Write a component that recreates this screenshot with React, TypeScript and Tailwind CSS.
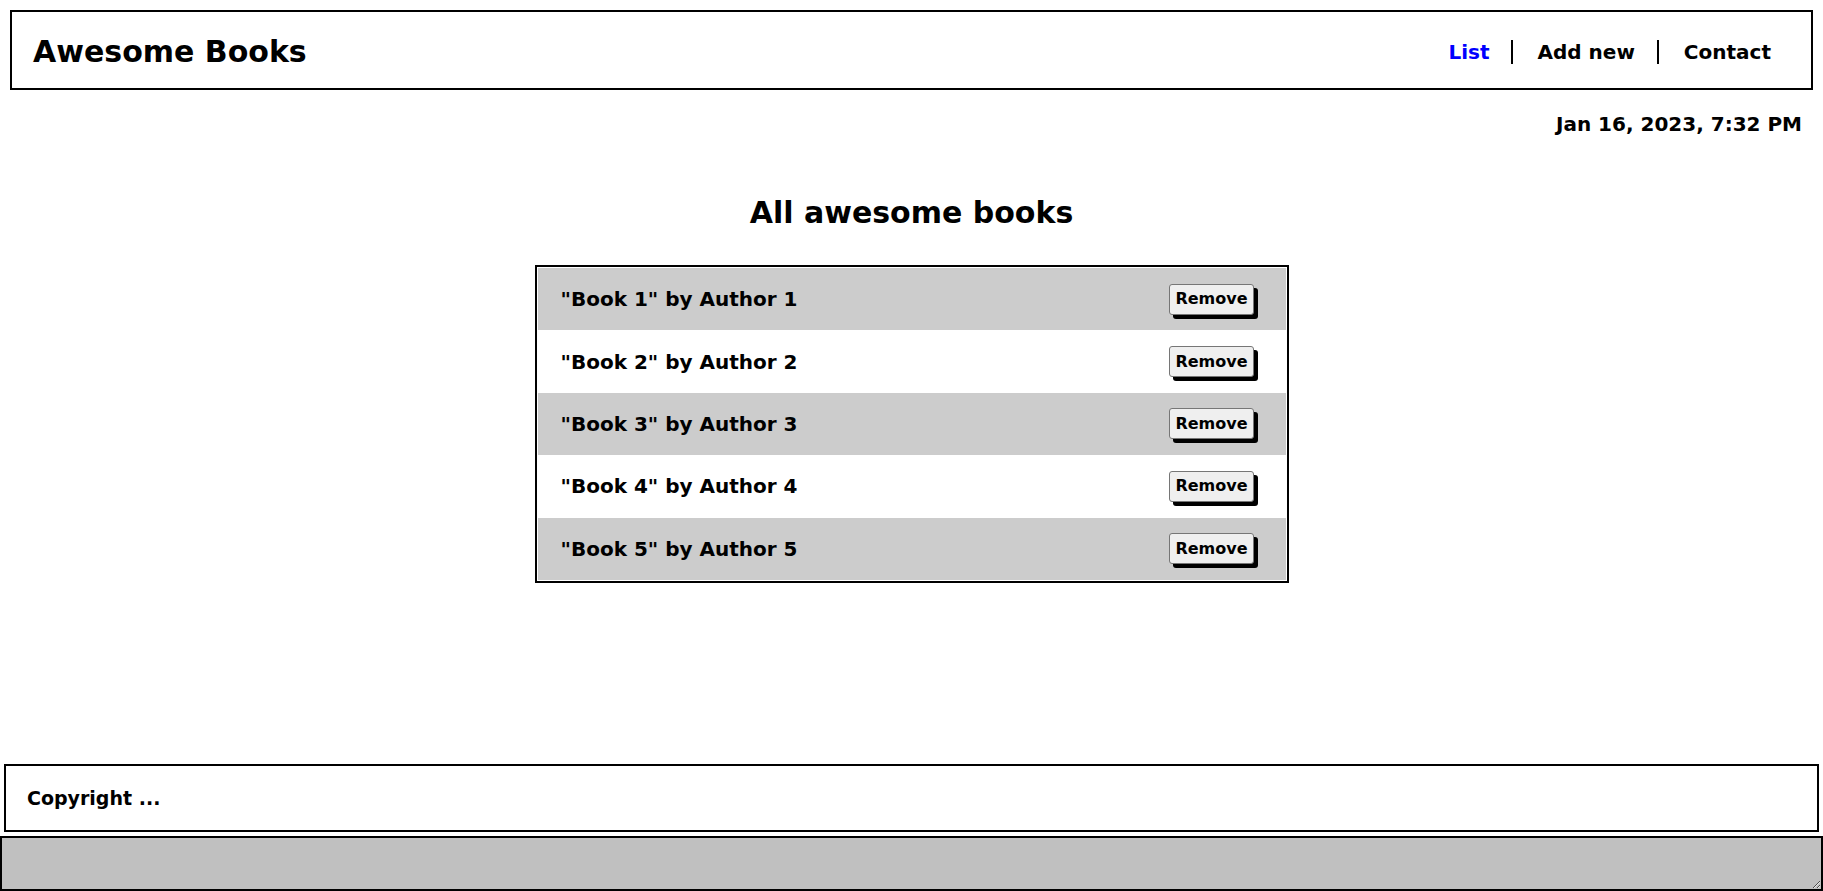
import React from 'react';

const books = [
  { title: 'Book 1', author: 'Author 1' },
  { title: 'Book 2', author: 'Author 2' },
  { title: 'Book 3', author: 'Author 3' },
  { title: 'Book 4', author: 'Author 4' },
  { title: 'Book 5', author: 'Author 5' },
];

export default function App() {
  return (
    <div className="min-h-screen flex flex-col bg-white text-black font-bold font-['DejaVu_Sans',Verdana,sans-serif]">
      {/* Header */}
      <header className="mx-[10px] mt-[10px] h-[80px] border-2 border-black pl-[21px] pr-[18px] pt-[3px] flex items-center justify-between">
        <h1 className="text-[30px] leading-none">Awesome Books</h1>
        <ul className="flex items-center text-[20px]">
          <li className="pr-[21px] border-r-2 border-black leading-[24px] text-[#0000ff]">List</li>
          <li className="pl-[25px] pr-[22px] border-r-2 border-black leading-[24px]">Add new</li>
          <li className="pl-[25px] pr-[22px] leading-[24px]">Contact</li>
        </ul>
      </header>

      <main className="flex-1 flex flex-col">
        <p className="text-right text-[20px] pr-[21px] mt-[19px]">Jan 16, 2023, 7:32 PM</p>

        <h2 className="text-center text-[30px] mt-[51px]">All awesome books</h2>

        <div className="mx-auto mt-[30px] w-[754px] border-2 border-black p-px">
          {books.map((b, i) => (
            <div
              key={b.title}
              className={`h-[62.4px] flex items-center justify-between pl-[23px] pr-[32px] ${i % 2 === 0 ? 'bg-[#cccccc]' : 'bg-white'}`}
            >
              <span className="text-[20px]">"{b.title}" by {b.author}</span>
              <button className="h-[31px] px-[5px] text-[16px] font-bold bg-[#efefef] border border-[#767676] rounded-[3px] shadow-[4px_4px_0_#000]">
                Remove
              </button>
            </div>
          ))}
        </div>
      </main>

      {/* Footer */}
      <footer className="mx-1 h-[68px] border-2 border-black px-[21px] flex items-center">
        <p className="text-[19px]">Copyright ...</p>
      </footer>

      <textarea
        readOnly
        className="block mt-1 w-full h-[55px] border-2 border-black bg-[#c0c0c0] outline-none"
      />
    </div>
  );
}
